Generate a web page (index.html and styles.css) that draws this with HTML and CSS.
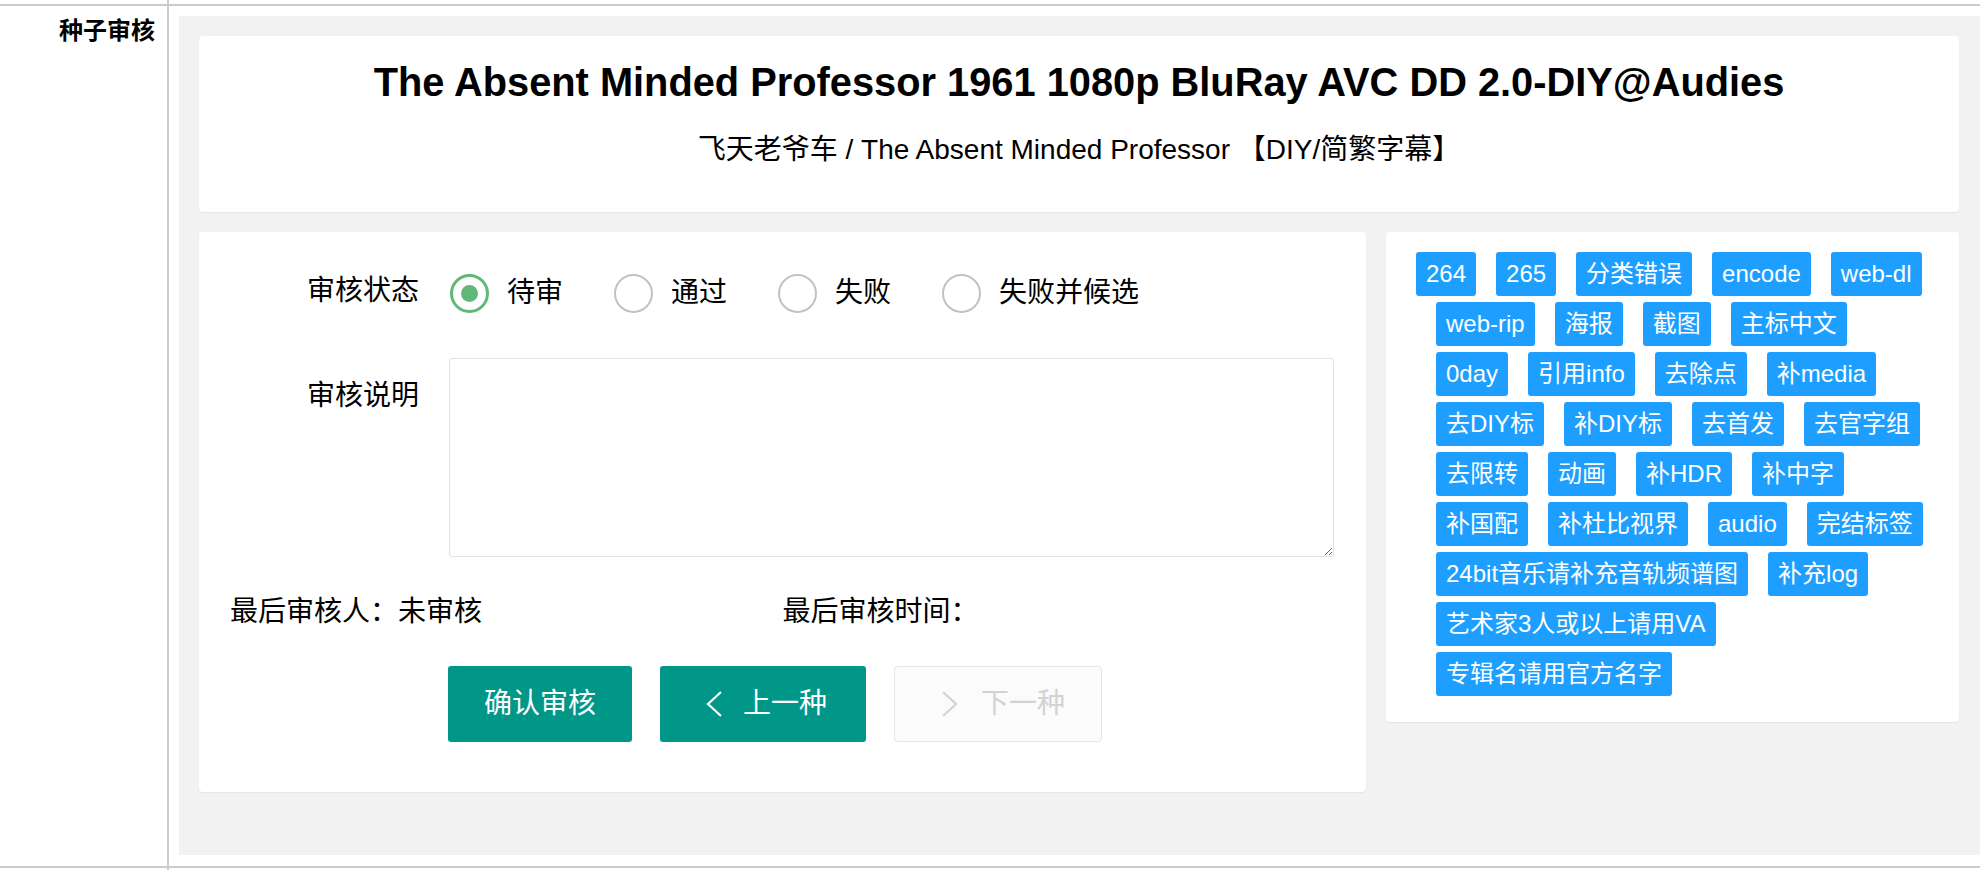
FILE: index.html
```html
<!DOCTYPE html>
<html lang="zh-CN">
<head>
<meta charset="utf-8">
<title>种子审核</title>
<link rel="stylesheet" href="styles.css">
</head>
<body>
<div class="table">
  <div class="row stub-top">
    <div class="cell-label"></div>
    <div class="cell-content"></div>
  </div>
  <div class="row main-row">
    <div class="cell-label"><span class="row-title">种子审核</span></div>
    <div class="cell-content">
      <div class="panel">
        <div class="card head-card">
          <h2 class="torrent-title">The Absent Minded Professor 1961 1080p BluRay AVC DD 2.0-DIY@Audies</h2>
          <div class="torrent-sub">飞天老爷车 / The Absent Minded Professor 【DIY/简繁字幕】</div>
        </div>
        <div class="lower">
          <div class="card form-card">
            <div class="form-row radio-row">
              <div class="form-label">审核状态</div>
              <div class="form-input radios">
                <div class="radio checked"><span class="radio-icon"></span><span class="radio-text">待审</span></div>
                <div class="radio"><span class="radio-icon"></span><span class="radio-text">通过</span></div>
                <div class="radio"><span class="radio-icon"></span><span class="radio-text">失败</span></div>
                <div class="radio"><span class="radio-icon"></span><span class="radio-text">失败并候选</span></div>
              </div>
            </div>
            <div class="form-row text-row">
              <div class="form-label label-top">审核说明</div>
              <div class="form-input">
                <textarea class="note"></textarea>
              </div>
            </div>
            <div class="info-row">
              <div class="info-col">最后审核人：未审核</div>
              <div class="info-col">最后审核时间：</div>
            </div>
            <div class="btn-row">
              <button class="btn btn-confirm">确认审核</button>
              <button class="btn btn-nav"><svg class="chev" width="18" height="26" viewBox="0 0 18 26"><polyline points="16,1 3,13 16,25" fill="none" stroke="currentColor" stroke-width="2.2"/></svg><span>上一种</span></button>
              <button class="btn btn-nav btn-disabled"><svg class="chev" width="18" height="26" viewBox="0 0 18 26"><polyline points="2,1 15,13 2,25" fill="none" stroke="currentColor" stroke-width="2.2"/></svg><span>下一种</span></button>
            </div>
          </div>
          <div class="card tag-card">
            <div class="tags">
              <span class="tag first">264</span>
              <span class="tag">265</span>
              <span class="tag">分类错误</span>
              <span class="tag">encode</span>
              <span class="tag">web-dl</span>
              <span class="tag">web-rip</span>
              <span class="tag">海报</span>
              <span class="tag">截图</span>
              <span class="tag">主标中文</span>
              <span class="tag">0day</span>
              <span class="tag">引用info</span>
              <span class="tag">去除点</span>
              <span class="tag">补media</span>
              <span class="tag">去DIY标</span>
              <span class="tag">补DIY标</span>
              <span class="tag">去首发</span>
              <span class="tag">去官字组</span>
              <span class="tag">去限转</span>
              <span class="tag">动画</span>
              <span class="tag">补HDR</span>
              <span class="tag">补中字</span>
              <span class="tag">补国配</span>
              <span class="tag">补杜比视界</span>
              <span class="tag">audio</span>
              <span class="tag">完结标签</span>
              <span class="tag">24bit音乐请补充音轨频谱图</span>
              <span class="tag">补充log</span>
              <span class="tag">艺术家3人或以上请用VA</span>
              <span class="tag">专辑名请用官方名字</span>
            </div>
          </div>
        </div>
      </div>
    </div>
  </div>
  <div class="row stub-bottom">
    <div class="cell-label"></div>
    <div class="cell-content"></div>
  </div>
</div>
</body>
</html>
```

FILE: styles.css
```css
html, body {
  margin: 0;
  padding: 0;
  background: #fff;
}
body {
  font-family: "Liberation Sans", "Noto Sans CJK SC", sans-serif;
  color: #000;
  width: 1980px;
  height: 870px;
  overflow: hidden;
}
.table {
  display: flex;
  flex-direction: column;
  height: 870px;
}
.row {
  display: flex;
}
.stub-top {
  height: 4px;
}
.main-row {
  border-top: 2px solid #cccccc;
}
.stub-bottom {
  border-top: 2px solid #cccccc;
  flex: 1;
}
.cell-label {
  width: 167px;
  flex: none;
  border-right: 2px solid #cccccc;
  box-sizing: content-box;
  text-align: right;
}
.cell-content {
  flex: 1;
  min-width: 0;
}
.main-row .cell-label {
  padding-top: 8px;
}
.row-title {
  display: block;
  padding-right: 12px;
  font-size: 24px;
  line-height: 34px;
  font-weight: bold;
}
.main-row .cell-content {
  padding: 10px 0 11px 10px;
}
.panel {
  background: #f2f2f2;
  padding: 20px 21px 63px 20px;
}
.card {
  background: #fff;
  border-radius: 4px;
  box-shadow: 0 1px 2px 0 rgba(0, 0, 0, 0.06);
}
.head-card {
  padding: 22px 20px 42px;
  text-align: center;
}
.torrent-title {
  margin: 0;
  font-size: 39.8px;
  line-height: 48px;
  font-weight: bold;
}
.torrent-sub {
  margin-top: 24px;
  font-size: 28px;
  line-height: 40px;
}
.lower {
  display: grid;
  grid-template-columns: 1167fr 573fr;
  gap: 20px;
  margin-top: 20px;
  align-items: start;
}
.form-card {
  padding: 39px 31px 50px;
  font-size: 28px;
}
.form-row {
  display: flex;
}
.form-label {
  width: 189px;
  flex: none;
  text-align: right;
  line-height: 40px;
  padding-right: 31px;
}
.form-input {
  flex: 1;
  min-width: 0;
}
.radios {
  display: flex;
  align-items: center;
  height: 40px;
  padding-top: 2px;
}
.radio {
  display: flex;
  align-items: center;
  margin-right: 51px;
}
.radio-icon {
  width: 39px;
  height: 39px;
  box-sizing: border-box;
  border: 2.5px solid #c2c2c2;
  border-radius: 50%;
  margin-right: 18px;
  position: relative;
  flex: none;
}
.radio.checked .radio-icon {
  border: 3px solid #5fb878;
}
.radio.checked .radio-icon::after {
  content: "";
  position: absolute;
  left: 8px;
  top: 8px;
  width: 17px;
  height: 17px;
  border-radius: 50%;
  background: #5fb878;
}
.radio-text {
  line-height: 40px;
}
.text-row {
  margin-top: 45px;
}
.label-top {
  padding-top: 18px;
}
.note {
  display: block;
  width: 885px;
  height: 199px;
  box-sizing: border-box;
  border: 1px solid #e2e2e2;
  border-radius: 3px;
  margin: 0 0 0 -1px;
  padding: 10px;
  font-family: inherit;
  font-size: 24px;
  resize: both;
  outline: none;
}
.info-row {
  display: grid;
  grid-template-columns: 1fr 1fr;
  margin-top: 35px;
  line-height: 40px;
}
.btn-row {
  display: flex;
  gap: 28px;
  margin-top: 34px;
  padding-left: 218px;
}
.btn {
  height: 76px;
  border: none;
  border-radius: 3px;
  background: #009688;
  color: #fff;
  font-family: inherit;
  font-size: 28px;
  line-height: 76px;
  padding: 0 36px;
  display: flex;
  align-items: center;
  box-sizing: border-box;
}
.btn-nav {
  padding: 0 39px 0 45px;
}
.btn-nav .chev {
  margin-right: 20px;
  display: block;
}
.btn-disabled {
  background: #fbfbfb;
  border: 1px solid #e6e6e6;
  color: #d2d2d2;
  padding: 0 36px 0 46px;
}
.btn-disabled .chev {
  margin-right: 22px;
}
.tag-card {
  padding: 20px 23px 26px 50px;
}
.tags {
  display: flex;
  flex-wrap: wrap;
  gap: 6px 20px;
}
.tag {
  display: block;
  height: 44px;
  line-height: 44px;
  padding: 0 10px;
  background: #1e9fff;
  color: #fff;
  font-size: 24px;
  border-radius: 3px;
  white-space: nowrap;
}
.tag.first {
  margin-left: -20px;
}
```
